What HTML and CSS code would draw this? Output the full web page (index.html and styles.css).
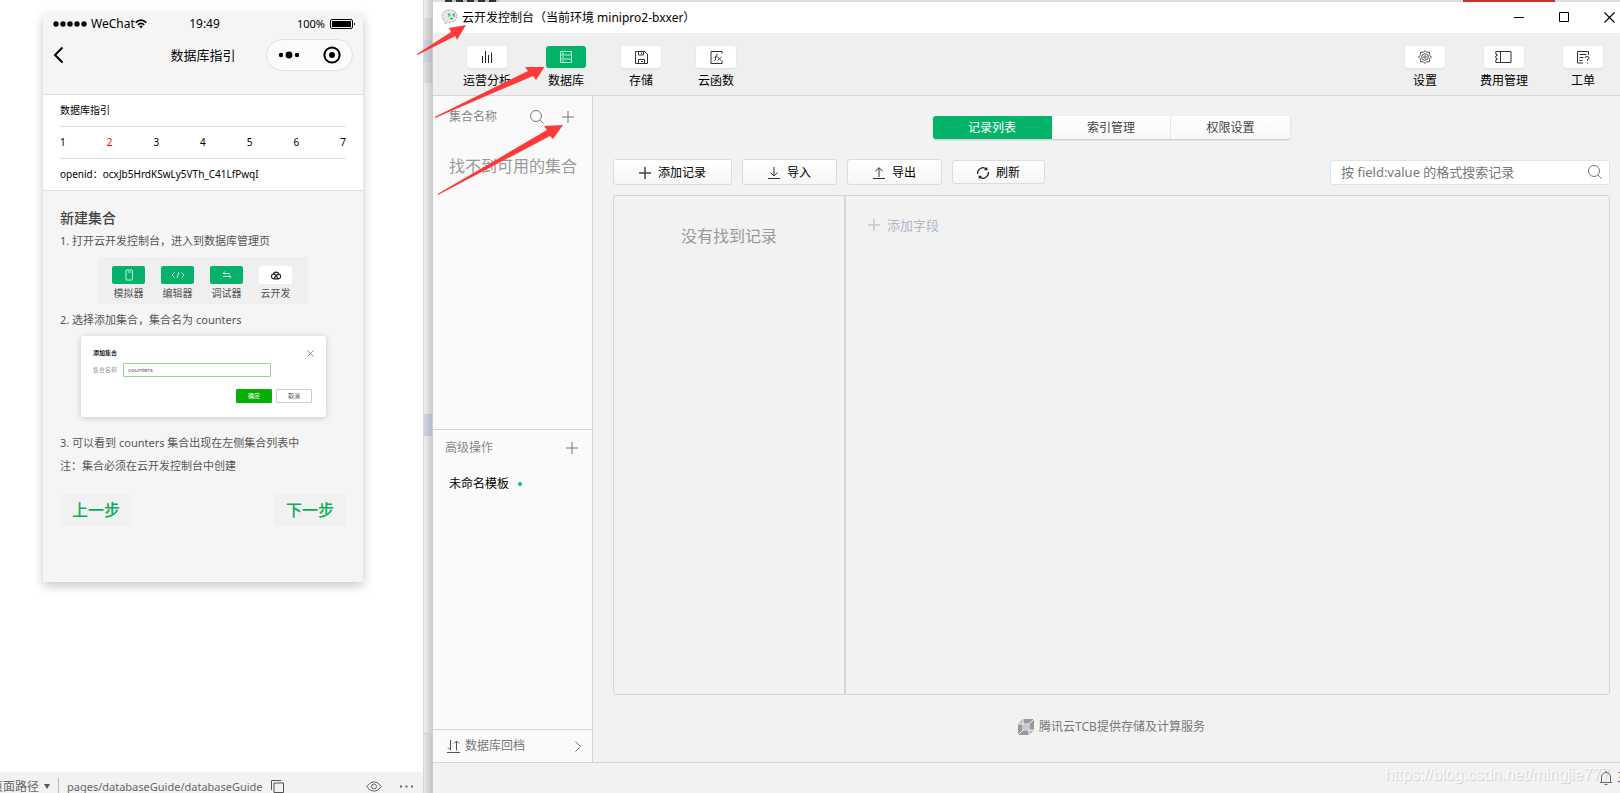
FILE: index.html
```html
<!DOCTYPE html>
<html lang="zh-CN">
<head>
<meta charset="utf-8">
<title>云开发控制台</title>
<link rel="stylesheet" href="styles.css">
</head>
<body>
<div class="desktop">
  <section class="simulator">
    <div class="stage">
      <div class="phone">
        <header class="phone-head">
          <div class="phone-status">
            <span class="carrier">
              <svg width="35" height="8" viewBox="0 0 35 8"><g fill="#000"><circle cx="3" cy="4" r="2.7"/><circle cx="10" cy="4" r="2.7"/><circle cx="17" cy="4" r="2.7"/><circle cx="24" cy="4" r="2.7"/><circle cx="31" cy="4" r="2.7"/></g></svg>
              <span>WeChat</span>
              <svg width="12" height="10" viewBox="0 0 12 10" fill="none" stroke="#000" stroke-width="1.7"><path d="M.7 3.6Q6-1.4 11.3 3.6M2.8 5.9Q6 3 9.2 5.9"/><path d="M4.2 7.3Q6 5.8 7.8 7.3L6 9.4Z" fill="#000" stroke="none"/></svg>
            </span>
            <span class="clock">19:49</span>
            <span class="battery">100%
              <svg width="26" height="10" viewBox="0 0 26 10"><rect x=".5" y=".5" width="22" height="9" rx="1.5" fill="none" stroke="#000"/><rect x="2" y="2" width="19" height="6" rx=".5"/><path d="M24 3.5q2 1.500 0 3z"/></svg>
            </span>
          </div>
          <div class="phone-nav">
            <button class="plain" aria-label="返回"><svg width="11" height="18" viewBox="0 0 11 18" fill="none" stroke="#000" stroke-width="2"><path d="M9.500 1.500 2 9l7.500 7.500"/></svg></button>
            <span class="phone-title">数据库指引</span>
            <div class="capsule">
              <button class="plain" aria-label="更多"><svg width="22" height="8" viewBox="0 0 22 8"><circle cx="3" cy="4" r="2.2"/><circle cx="11" cy="4" r="3.4"/><circle cx="19" cy="4" r="2.2"/></svg></button>
              <button class="plain" aria-label="关闭"><svg width="18" height="18" viewBox="0 0 18 18"><circle cx="9" cy="9" r="7.600" fill="none" stroke="#000" stroke-width="2"/><circle cx="9" cy="9" r="3"/></svg></button>
            </div>
          </div>
        </header>
        <div class="guide-card">
          <div class="guide-row">数据库指引</div>
          <div class="guide-row steps"><span>1</span><span class="current">2</span><span>3</span><span>4</span><span>5</span><span>6</span><span>7</span></div>
          <div class="guide-row">openid：ocxJb5HrdKSwLy5VTh_C41LfPwqI</div>
        </div>
        <div class="guide-body">
          <h2>新建集合</h2>
          <p>1. 打开云开发控制台，进入到数据库管理页</p>
          <div class="mini-tools">
            <div class="mini-tool"><span class="mini-icon on"><svg width="10" height="12" viewBox="0 0 10 12" fill="none" stroke="#c6f0dc"><rect x="2" y="1" width="6.500" height="10" rx=".8"/><path d="M4 3h3"/></svg></span>模拟器</div>
            <div class="mini-tool"><span class="mini-icon on"><svg width="14" height="8" viewBox="0 0 14 8" fill="none" stroke="#c6f0dc"><path d="M3.500 1.500 1 4l2.500 2.500M10.500 1.500 13 4l-2.500 2.500M8 1 6 7"/></svg></span>编辑器</div>
            <div class="mini-tool"><span class="mini-icon on"><svg width="10" height="8" viewBox="0 0 10 8" fill="none" stroke="#c6f0dc"><path d="M3 .5 1 2.500h7M3 2.500v1M1 5.500h8L7.500 7.500M7 4v2"/></svg></span>调试器</div>
            <div class="mini-tool"><span class="mini-icon"><svg width="12" height="10" viewBox="0 0 12 10" fill="none" stroke="#222" stroke-width="1.200"><path d="M3.500 8.800a2.400 2.400 0 0 1-.3-4.700 3 3 0 0 1 5.700 0 2.400 2.400 0 0 1-.3 4.700ZM3.200 4.200Q6 4 7.800 8.500M8.900 4.100Q6 4.500 4.200 8.500"/></svg></span>云开发</div>
          </div>
          <p>2. 选择添加集合，集合名为 counters</p>
          <div class="mini-dialog">
            <div class="mini-head"><b>添加集合</b><svg width="7" height="7" viewBox="0 0 7 7" stroke="#888"><path d="M.5.5l6 6m0-6-6 6"/></svg></div>
            <div class="mini-field"><label for="mini-name">集合名称</label><input id="mini-name" value="counters"></div>
            <div class="mini-actions"><button class="ok">确定</button><button>取消</button></div>
          </div>
          <p>3. 可以看到 counters 集合出现在左侧集合列表中</p>
          <p class="note">注：集合必须在云开发控制台中创建</p>
          <div class="guide-nav"><button>上一步</button><button>下一步</button></div>
        </div>
      </div>
    </div>
    <footer class="pathbar">
      <span class="path-label">页面路径</span>
      <svg width="6" height="5" viewBox="0 0 6 5"><path d="M0 0h6L3 5z" fill="#555"/></svg>
      <span class="path">pages/databaseGuide/databaseGuide</span>
      <button class="plain" aria-label="复制"><svg width="13" height="13" viewBox="0 0 13 13" fill="none" stroke="#555"><path d="M.5 10V.5H10M3 3h9.500v9.500H3z"/></svg></button>
      <button class="plain eye" aria-label="预览"><svg width="16" height="11" viewBox="0 0 16 11" fill="none" stroke="#666"><path d="M.5 5.500Q8-4 15.500 5.500 8 15 .5 5.500Z"/><circle cx="8" cy="5.500" r="2.500"/></svg></button>
      <button class="plain" aria-label="更多"><svg width="13" height="3" viewBox="0 0 13 3" fill="#666"><path d="M0 .5h2v2H0zM5.500.5h2v2h-2zM11 .5h2v2h-2z"/></svg></button>
    </footer>
  </section>
  <div class="gutter"><i class="g-dark"></i><i class="g-mark"></i><i class="g-dark end"></i><i class="g-light"></i><i class="g-mark"></i><i class="g-fill"></i><i class="g-line"></i></div>
  <section class="console">
    <div class="behind"><i class="ink"></i><i class="red"></i></div>
    <header class="titlebar">
      <svg width="17" height="17" viewBox="0 0 17 17"><path d="M8.500 1C4 1 1 3.500 1 7.200c0 2.300 1.200 4.200 3 5.200v2.600l2.600-1.800C12 14 16 11.500 16 7.200 16 3.500 13 1 8.500 1Z" fill="#e7e9e8" stroke="#aaa" stroke-dasharray="2 1"/><path d="m7 4.500 2 1.500-2 1.500M14 4.500 12 6l2 1.500M9 9q1.500 1.500 3 0" fill="none" stroke="#23b26d" stroke-width="1.200"/></svg>
      <h1>云开发控制台（当前环境 minipro2-bxxer）</h1>
      <div class="win-btns">
        <button class="plain" aria-label="最小化"><svg width="11" height="11" viewBox="0 0 11 11" stroke="#000"><path d="M0 5.500h10"/></svg></button>
        <button class="plain" aria-label="最大化"><svg width="11" height="11" viewBox="0 0 11 11" fill="none" stroke="#000"><path d="M.5.5h9v9h-9z"/></svg></button>
        <button class="plain" aria-label="关闭窗口"><svg width="11" height="11" viewBox="0 0 11 11" stroke="#000" stroke-width="1.100"><path d="m.5.5 10 10m0-10-10 10"/></svg></button>
      </div>
    </header>
    <nav class="toolbar">
      <button class="tool"><span class="tile"><svg width="12" height="12" viewBox="0 0 12 12" stroke="#222"><path d="M1.500 12V5M4.500 12V0M7.500 12V4M10.500 12V1.500"/></svg></span>运营分析</button>
      <button class="tool"><span class="tile on"><svg width="12" height="12" viewBox="0 0 12 12" fill="none" stroke="#bff0d9"><path d="M.5.5h11v11H.5zM.5 4h11M.5 8h11M2 2.500h2M2 6h2M2 10h2"/></svg></span>数据库</button>
      <button class="tool"><span class="tile"><svg width="13" height="13" viewBox="0 0 13 13" fill="none" stroke="#333"><path d="M.5.500h9L12.500 3v9.500H.5zM3.500.500v3.500h5V.500M3.500 12.500V8.500h6v4M6.500 1.500v1.500M6 10.500h2"/></svg></span>存储</button>
      <button class="tool"><span class="tile"><svg width="13" height="13" viewBox="0 0 13 13" fill="none" stroke="#333"><path d="M12 .5H1v12h11M12 .5v2M12 12.500v-3"/><path d="M8 3.500q-1.500-.5-2 1.500l-.7 4q-.3 1-1.300.6M4.500 6h3M8 6l3 3.500M11.500 6 7.500 9.500" stroke-width=".9"/></svg></span>云函数</button>
      <span class="grow"></span>
      <button class="tool"><span class="tile"><svg width="14" height="14" viewBox="0 0 14 14" fill="none" stroke="#555"><path d="m7 .6 1.700 1.700 2.800-.1-.1 2.600L13.400 7l-2 2.200.1 2.600-2.800-.1L7 13.400l-1.700-1.700-2.800.1.100-2.600L.6 7l2-2.200-.1-2.600 2.800.1Z"/><circle cx="7" cy="7" r="3.300"/><circle cx="7" cy="7" r="1.200"/></svg></span>设置</button>
      <button class="tool"><span class="tile"><svg width="17" height="12" viewBox="0 0 17 12" fill="none" stroke="#333"><path d="M.8.500H16v11H.8V9l1.700-1L.8 7V5l1.700-1L.8 3zM5.500.500v11"/></svg></span>费用管理</button>
      <button class="tool"><span class="tile"><svg width="13" height="13" viewBox="0 0 13 13" fill="none" stroke="#333"><path d="M11.500 4V.500H.5v11.500H6M2.500 3.500h7M2.500 6.500h4M2.500 9.500h3M8 7q0-1.500 2-1.500t2 1.500q0 1-1.500 1.500V10M10.500 11.500v1"/></svg></span>工单</button>
    </nav>
    <div class="workspace">
      <aside class="sidebar">
        <div class="collections">
          <div class="side-head"><span>集合名称</span>
            <button class="plain" aria-label="搜索集合"><svg width="14" height="14" viewBox="0 0 14 14" fill="none" stroke="#777"><circle cx="6" cy="6" r="5.500"/><path d="m10 10 3.500 3.500"/></svg></button>
            <button class="plain" aria-label="添加集合"><svg width="12" height="12" viewBox="0 0 12 12" stroke="#777"><path d="M6 0v12M0 6h12"/></svg></button>
          </div>
          <p class="empty">找不到可用的集合</p>
        </div>
        <div class="advanced">
          <div class="adv-head"><span>高级操作</span><button class="plain" aria-label="添加模板"><svg width="12" height="12" viewBox="0 0 12 12" stroke="#777"><path d="M6 0v12M0 6h12"/></svg></button></div>
          <a class="template" href="#">未命名模板<i></i></a>
        </div>
        <button class="restore"><svg width="13" height="13" viewBox="0 0 13 13" fill="none" stroke="#555"><path d="M3.500 0v10M1 7.500 3.500 10M9.500 10.500V1M7 3.500 9.500 1 12 3.500M0 12.500h13"/></svg><span>数据库回档</span><svg width="6" height="11" viewBox="0 0 6 11" fill="none" stroke="#777"><path d="m.5.500 5 5-5 5"/></svg></button>
      </aside>
      <main class="main">
        <div class="tabs"><button class="active">记录列表</button><button>索引管理</button><button>权限设置</button></div>
        <div class="actions">
          <button class="act wide"><svg width="12" height="12" viewBox="0 0 12 12" stroke="#444" stroke-width="1.500"><path d="M6 0v12M0 6h12"/></svg>添加记录</button>
          <button class="act"><svg width="12" height="12" viewBox="0 0 12 12" fill="none" stroke="#333"><path d="M6 0v9M2.500 5.500 6 9l3.500-3.500M0 11.500h12"/></svg>导入</button>
          <button class="act"><svg width="12" height="12" viewBox="0 0 12 12" fill="none" stroke="#333"><path d="M6 10V1M2.500 4 6 .7 9.500 4M0 11.500h12"/></svg>导出</button>
          <button class="act small"><svg width="12" height="12" viewBox="0 0 12 12" fill="none" stroke="#222" stroke-width="1.300"><path d="M.7 7A5.300 5.300 0 0 1 9.500 2.200M11.300 5A5.300 5.300 0 0 1 2.500 9.800M9.700.500v2.200H7.500M2.300 11.500V9.300h2.200"/></svg>刷新</button>
          <div class="search"><input type="text" aria-label="搜索记录" placeholder="按 field:value 的格式搜索记录"><svg width="14" height="14" viewBox="0 0 14 14" fill="none" stroke="#777"><circle cx="6" cy="6" r="5.500"/><path d="m10 10 3.500 3.500"/></svg></div>
        </div>
        <div class="records">
          <div class="record-list">没有找到记录</div>
          <div class="fields"><button class="add-field"><svg width="12" height="12" viewBox="0 0 12 12" stroke="#c3c8d3" stroke-width="1.500"><path d="M6 0v12M0 6h12"/></svg>添加字段</button></div>
        </div>
        <p class="credit"><svg width="16" height="16" viewBox="0 0 16 16"><path d="M5 0h11v11l-5 5H0V5z" fill="#999"/><path d="M5 0 0 5h5zM11 11h5l-5 5z" fill="#bbb"/><path d="M5 5h6v6H5zM5 0v5M0 5h5M11 5l5-5M5 11l-5 5M11 11v5M11 11h5" fill="none" stroke="#f2f2f2"/><path d="M5.500 5.500h5v5h-5z" fill="#ccc"/></svg>腾讯云TCB提供存储及计算服务</p>
      </main>
    </div>
    <footer class="bottombar">
      <span class="watermark">https://blog.csdn.net/mingjie777</span>
      <svg width="12" height="14" viewBox="0 0 12 14" fill="none" stroke="#666"><path d="M0 11.500h12M1.500 11.500V6a4.500 4.500 0 0 1 9 0v5.500M6 1.500V0M4.500 13.500h3"/></svg>
      <span class="cut">三</span>
    </footer>
  </section>
</div>
<svg class="arrows" width="570" height="200" viewBox="0 0 570 200" fill="#fc3b38"><path d="m417 54 34-22-2-4 17-3-9 15-1.500-4-38 19zM434.500 117 528 71l-3-4 19.500 0L536 80l-3-4-98 42zM437.500 194 547 130l-3-4 19-1-10 14-3-3-112 59z"/></svg>
</body>
</html>
```
FILE: styles.css
```css
* { box-sizing: border-box; }
body {
  margin: 0;
  font: 12px/18px "Noto Sans", "Noto Sans CJK SC", sans-serif;
  color: #000;
  background: #fff;
}
button, input { font: inherit; color: inherit; margin: 0; }
button { cursor: pointer; }
svg { display: block; flex: none; }
h1, h2, p { margin: 0; font-weight: 400; }
.plain { border: 0; padding: 0; background: none; }
.grow { flex: 1; }

.desktop {
  display: grid;
  grid-template-columns: 423px 9px minmax(0, 1fr);
  height: 100vh;
  overflow: hidden;
}

/* simulator */
.simulator { display: flex; flex-direction: column; min-height: 0; }
.stage { flex: 1; padding: 13px 60px 0 43px; }
.phone { background: #f5f5f5; box-shadow: 0 4px 10px rgba(0, 0, 0, .22); }
.phone-head { height: 82px; border-bottom: 1px solid #ddd; }
.phone-status {
  display: grid;
  grid-template-columns: 1fr auto 1fr;
  align-items: center;
  padding: 2px 7px 0 10px;
}
.carrier, .battery { display: flex; align-items: center; gap: 2px; }
.carrier { gap: 3px; }
.carrier span { margin-right: -3px; }
.battery { justify-content: flex-end; gap: 5px; font-size: 11px; }
.phone-nav {
  display: grid;
  grid-template-columns: 1fr auto 1fr;
  align-items: center;
  padding: 6px 10px 0;
}
.phone-title { font-size: 13px; }
.capsule {
  justify-self: end;
  display: flex;
  align-items: center;
  justify-content: space-around;
  width: 87px;
  height: 32px;
  border: 1px solid #e2e2e2;
  border-radius: 16px;
  background: #fbfbfb;
}
.guide-card { background: #fff; padding: 0 17px; border-bottom: 1px solid #ddd; font-size: 10px; }
.guide-row { height: 32px; line-height: 31px; border-bottom: 1px solid #ddd; }
.guide-row:last-child { border: 0; height: 31px; }
.steps { display: flex; justify-content: space-between; }
.current { color: #f00; }
.guide-body { padding: 15px 17px 56px; font-size: 11px; line-height: 22px; color: #555; }
.guide-body h2 { font-size: 14px; line-height: 24px; font-weight: 500; color: #444; }
.mini-tools {
  display: flex;
  gap: 16px;
  width: 210px;
  height: 47px;
  margin: 5px auto;
  padding: 9px 0 0 14px;
  background: #efefef;
}
.mini-tool { width: 33px; font-size: 10px; line-height: 18px; text-align: center; white-space: nowrap; }
.mini-icon { display: flex; align-items: center; justify-content: center; height: 18px; border-radius: 2px; background: #fff; }
.mini-icon.on { background: #06b26a; }
.mini-dialog {
  width: 245px;
  height: 81px;
  margin: 5px auto 15px 21px;
  padding: 12px;
  border-radius: 3px;
  background: #fff;
  box-shadow: 0 1px 6px rgba(0, 0, 0, .2);
  font-size: 6px;
  line-height: 10px;
}
.mini-head { display: flex; justify-content: space-between; align-items: center; color: #222; }
.mini-field { display: flex; align-items: center; margin-top: 5px; }
.mini-field label { width: 30px; color: #999; }
.mini-field input { width: 148px; height: 14px; padding: 0 4px; border: 1px solid #8bd68b; border-radius: 1px; background: #fff; outline: 0; }
.mini-actions { display: flex; justify-content: flex-end; gap: 4px; margin: 12px 2px 0 0; }
.mini-actions button { width: 36px; height: 14px; padding: 0; border: 1px solid #ccc; border-radius: 1px; background: #fff; }
.mini-actions .ok { border-color: #06ae06; background: #06ae06; color: #fff; }
.note { margin-top: 1px; }
.guide-nav { display: flex; justify-content: space-between; margin-top: 17px; }
.guide-nav button { width: 72px; height: 32px; padding: 0; border: 0; border-radius: 3px; background: #f1f1f1; color: #06ae56; font-size: 16px; font-weight: 500; }

.pathbar {
  display: flex;
  align-items: center;
  height: 21px;
  padding: 8px 10px 0 0;
  background: #f2f2f2;
  color: #666;
  white-space: nowrap;
}
.path-label { margin: 0 5px 0 -9px; }
.path { margin: 0 8px 0 8px; padding-left: 8px; border-left: 1px solid #bbb; font-size: 11px; }
.eye { margin: 0 18px 0 auto; }

/* sliver of the window behind the console */
.gutter {
  display: flex;
  flex-direction: column;
  border-left: 1px solid #d5d5d5;
  background: linear-gradient(90deg, rgba(0, 0, 0, .02), rgba(0, 0, 0, .16)), #f3f3f3;
  padding-top: 18px;
}
.g-dark { height: 22px; background: rgba(0, 0, 0, .06); }
.g-dark.end { height: 21px; }
.g-mark { height: 22px; background: rgba(90, 110, 190, .2); }
.g-light { height: 309px; }
.g-light + .g-mark { margin-top: 0; }
.g-light { flex: 0 0 331px; }
.g-fill { flex: 1; }
.g-line { height: 60px; border-top: 1px solid #ccc; background: rgba(0, 0, 0, .03); }

/* console window */
.console { display: flex; flex-direction: column; min-width: 0; min-height: 0; border-left: 1px solid #ccc; background: #f2f2f2; }
.behind { display: flex; height: 2px; background: #ddd; padding: 0 65px 0 12px; justify-content: space-between; }
.ink { width: 54px; background: repeating-linear-gradient(90deg, #333 0 7px, #bbb 7px 11px); }
.red { width: 92px; background: #c8322b; }
.titlebar { display: flex; align-items: center; height: 31px; padding: 0 1px 0 8px; gap: 4px; background: #fff; }
.titlebar h1 { font-size: 12px; white-space: nowrap; }
.win-btns { display: flex; gap: 34px; margin-left: auto; padding-right: 4px; }
.toolbar {
  display: flex;
  gap: 35px;
  height: 63px;
  padding: 13px 17px 0 30px;
  border-bottom: 1px solid #d6d6d6;
  background: #efefef;
}
.toolbar .grow { margin-right: -35px; }
.tool { display: flex; flex-direction: column; align-items: center; gap: 4px; padding: 0; border: 0; background: none; white-space: nowrap; }
.tile { display: flex; align-items: center; justify-content: center; width: 40px; height: 22px; border-radius: 3px; background: #fff; box-shadow: 0 1px 2px rgba(0, 0, 0, .08); }
.tile.on { background: #04b36a; }
.workspace { flex: 1; display: flex; min-height: 0; border-bottom: 1px solid #d6d6d6; }
.sidebar { display: flex; flex-direction: column; width: 160px; border-right: 1px solid #d6d6d6; background: #fafafa; }
.collections { flex: 333; }
.side-head { display: flex; align-items: center; height: 41px; padding: 0 18px 0 16px; color: #888; }
.side-head span { margin-right: auto; }
.side-head button + button { margin-left: 18px; }
.empty { padding: 17px 16px; font-size: 16px; line-height: 24px; color: #999; white-space: nowrap; }
.advanced { flex: 299; border-top: 1px solid #d6d6d6; }
.adv-head { display: flex; align-items: center; justify-content: space-between; height: 35px; padding: 0 14px 0 12px; color: #888; }
.template { display: flex; align-items: center; gap: 9px; padding: 10px 16px; color: #000; text-decoration: none; }
.template i { width: 4px; height: 4px; border-radius: 2px; background: #07c160; }
.restore { display: flex; align-items: center; gap: 5px; height: 33px; padding: 0 11px 0 14px; border: 0; border-top: 1px solid #d6d6d6; background: none; color: #777; }
.restore span { margin-right: auto; }

.main { flex: 1; display: flex; flex-direction: column; min-width: 0; padding: 20px 10px 0 20px; }
.tabs { display: flex; align-self: center; border-radius: 3px; box-shadow: 0 1px 2px rgba(0, 0, 0, .2); overflow: hidden; }
.tabs button { width: 119px; height: 23px; padding: 1px 0 0; border: 0; border-right: 1px solid #e6e6e6; background: linear-gradient(#fff, #f7f7f7); color: #444; }
.tabs button:last-child { border: 0; }
.tabs .active { border-color: #04b36a; background: #04b36a; color: #fff; }
.actions { display: flex; align-items: center; gap: 10px; margin-top: 20px; }
.act {
  display: flex;
  align-items: center;
  justify-content: center;
  gap: 7px;
  width: 95px;
  height: 26px;
  padding: 1px 0 0;
  border: 1px solid #dcdcdc;
  border-radius: 3px;
  background: linear-gradient(#fff, #f6f6f6);
}
.act.wide { width: 119px; }
.act.small { width: 93px; height: 24px; }
.search { display: flex; align-items: center; width: 280px; height: 25px; margin-left: auto; padding: 0 7px 0 10px; border: 1px solid #e2e2e2; border-radius: 3px; background: #fff; }
.search input { flex: 1; min-width: 0; padding: 0; border: 0; outline: 0; background: none; font-size: 13px; }
.search input::placeholder { color: #777; }
.records { flex: 1; display: flex; margin-top: 10px; border: 1px solid #d6d6d6; border-radius: 3px; }
.record-list { width: 232px; padding-top: 28px; border-right: 2px solid #d6d6d6; font-size: 16px; line-height: 24px; text-align: center; color: #999; }
.fields { padding: 20px 22px; }
.add-field { display: flex; align-items: center; gap: 7px; padding: 0; border: 0; background: none; color: #b0b8c8; font-size: 13px; }
.credit { display: flex; align-items: center; justify-content: center; gap: 5px; height: 67px; padding-bottom: 4px; color: #777; }
.bottombar { display: flex; align-items: center; justify-content: flex-end; height: 30px; overflow: hidden; white-space: nowrap; }
.bottombar svg { margin: 0 5px 0 -10px; }
.watermark { padding-bottom: 6px; font: 16px/20px "Liberation Sans", sans-serif; color: #fafafa; text-shadow: 1px 1px 1px #ccc; }
.cut { width: 3px; overflow: hidden; color: #666; }

/* red pointers drawn over both windows */
.arrows { position: absolute; left: 0; top: 0; pointer-events: none; }
```
